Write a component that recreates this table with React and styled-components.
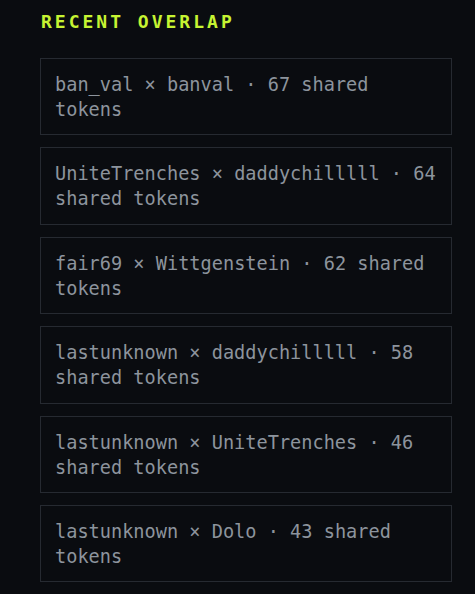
import styled, { createGlobalStyle } from 'styled-components';

const GlobalStyle = createGlobalStyle`
    html, body {
        margin: 0;
        padding: 0;
        background: #0a0c10;
    }
`

const Panel = styled.section`
    padding: 10px 23px 10px 40px;
    font-family: "DejaVu Sans Mono", "Liberation Mono", monospace;
`

const Title = styled.h2`
    margin: 0 0 24px 1px;
    font-size: 18px;
    line-height: 24px;
    font-weight: 700;
    letter-spacing: 3px;
    color: #c6f432;
`

const List = styled.ul`
    list-style: none;
    margin: 0;
    padding: 0;
    display: flex;
    flex-direction: column;
    gap: 12px;
`

const Item = styled.li`
    border: 1px solid #262a31;
    padding: 13px 12px 12.4px 14px;
    font-size: 18.6px;
    line-height: 25px;
    color: #8d949d;
`

const pairs = [
    { a: 'ban_val', b: 'banval', n: 67 },
    { a: 'UniteTrenches', b: 'daddychilllll', n: 64 },
    { a: 'fair69', b: 'Wittgenstein', n: 62 },
    { a: 'lastunknown', b: 'daddychilllll', n: 58 },
    { a: 'lastunknown', b: 'UniteTrenches', n: 46 },
    { a: 'lastunknown', b: 'Dolo', n: 43 },
];

const App = () => {
    return (
        <>
            <GlobalStyle />
            <Panel>
                <Title>RECENT OVERLAP</Title>
                <List>
                    {pairs.map(p => (
                        <Item key={p.a + p.b}>
                            {p.a} × {p.b} · {p.n} shared tokens
                        </Item>
                    ))}
                </List>
            </Panel>
        </>
    )
}

export default App;
